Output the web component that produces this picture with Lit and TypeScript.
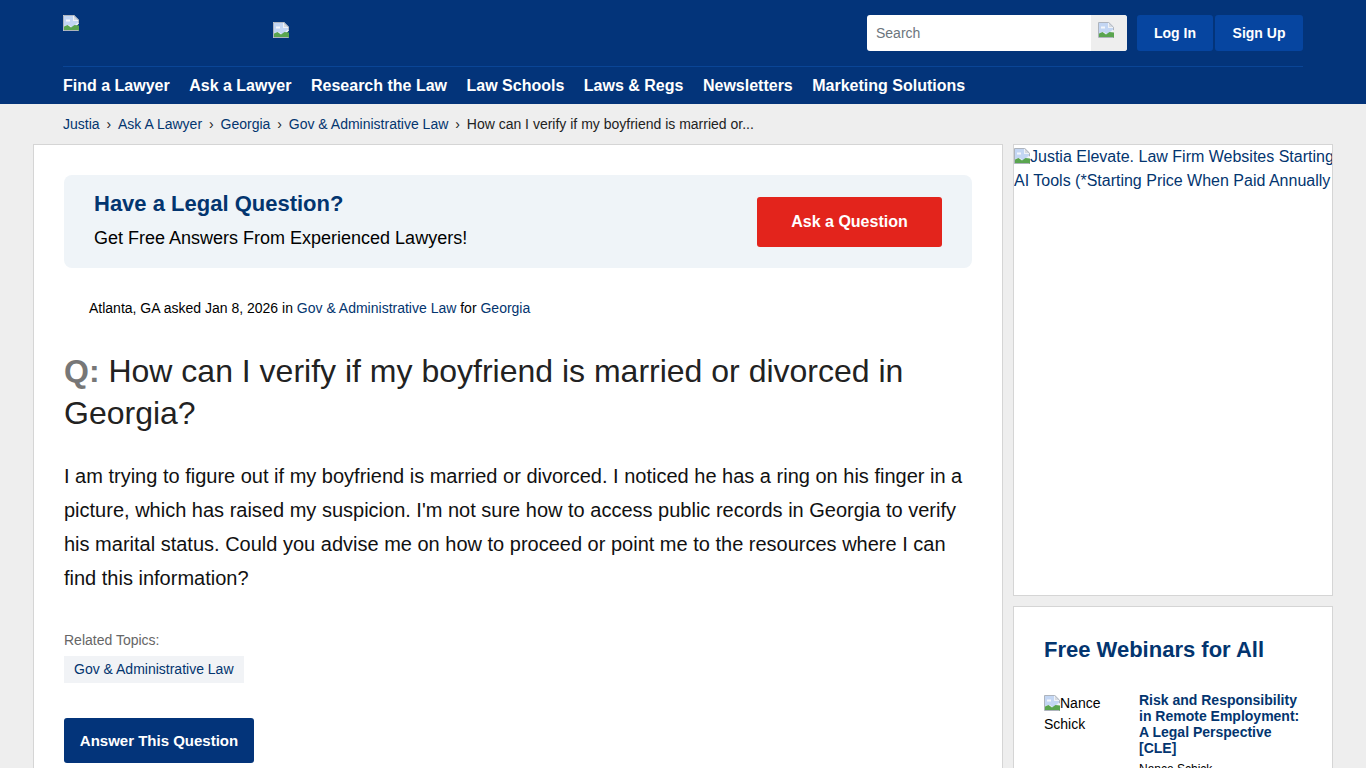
import { LitElement, html, css, svg } from "lit";
import { customElement } from "lit/decorators.js";

const brokenImage = svg`<svg class="broken" width="16" height="16" viewBox="0 0 16 16"><path d="M0 0H11L16 5V8.5L13 11.5V16H0Z" fill="#eef2f8"/><path d="M1 1H10V6H15V7.5L9 12.5L6 10L1 11Z" fill="#c3d6f3"/><path d="M3 4.5H7V6.5H3Z" fill="#f4f7fc"/><path d="M1 15V11.5L4.5 10L8 12.5L11.5 10L16 10.5V16H1Z" fill="#5aa54f"/><path d="M11 0.5V5H15.5Z" fill="#d6dae0"/><path d="M0.5 0.5H10.8L15.5 5.2V8.2M15.5 15.5H0.5V0.5" fill="none" stroke="#aeb4bd"/></svg>`;

@customElement("app-root")
export class AppRoot extends LitElement {
  static styles = css`
    :host {
      display: block;
      height: 768px;
      overflow: hidden;
      background: #eee;
      color: #000;
      font-family: "Liberation Sans", Arial, sans-serif;
    }
    a {
      color: #03356f;
      text-decoration: none;
    }
    .broken {
      display: inline-block;
      flex: none;
    }
    header {
      height: 104px;
      background: #03347a;
      box-sizing: border-box;
      padding: 15px 63px 0;
    }
    .top {
      width: 1240px;
      height: 52px;
      box-sizing: border-box;
      border-bottom: 1px solid #0a4596;
      display: flex;
      align-items: flex-start;
    }
    .logo {
      display: block;
      width: 210px;
      height: 16px;
    }
    .logo-two {
      display: block;
      padding-top: 7px;
    }
    .search {
      margin-left: auto;
      width: 260px;
      height: 36px;
      display: flex;
      background: #fff;
      border-radius: 3px;
      overflow: hidden;
    }
    .search .field {
      flex: 1;
      padding-left: 9px;
      font-size: 14px;
      line-height: 36px;
      color: #6c757d;
    }
    .search .go {
      width: 36px;
      background: #eee;
      padding: 7px 0 0 7px;
      box-sizing: border-box;
    }
    .auth {
      display: flex;
      gap: 2px;
      margin-left: 10px;
    }
    .auth a {
      height: 36px;
      line-height: 36px;
      background: #0645a0;
      color: #fff;
      font-size: 14px;
      font-weight: 700;
      text-align: center;
      border-radius: 3px;
    }
    .auth .login {
      width: 76px;
    }
    .auth .signup {
      width: 88px;
    }
    nav {
      display: flex;
      gap: 19.5px;
      margin-top: 9px;
    }
    nav a {
      color: #fff;
      font-size: 16px;
      font-weight: 700;
      line-height: 20px;
      white-space: nowrap;
    }
    .crumbs {
      height: 40px;
      box-sizing: border-box;
      padding-left: 63px;
      display: flex;
      align-items: center;
      font-size: 14px;
      color: #222;
      white-space: nowrap;
    }
    .crumbs i {
      font-style: normal;
      padding: 0 6.9px;
    }
    .layout {
      display: flex;
      align-items: flex-start;
      gap: 10px;
      padding-left: 33px;
    }
    main {
      width: 970px;
      box-sizing: border-box;
      padding: 30px 30px 40px;
      background: #fff;
      border: 1px solid #d5d5d5;
      border-bottom: 0;
    }
    .promo {
      height: 93px;
      box-sizing: border-box;
      background: #eff4f8;
      border-radius: 8px;
      padding: 0 30px;
      display: flex;
      align-items: center;
      justify-content: space-between;
    }
    .promo .lead {
      padding-bottom: 4px;
    }
    .promo h2 {
      margin: 0 0 8px;
      font-size: 22px;
      line-height: 28px;
      color: #03356f;
    }
    .promo p {
      margin: 0;
      font-size: 18px;
      line-height: 24px;
    }
    .ask {
      width: 185px;
      height: 50px;
      line-height: 50px;
      background: #e3241c;
      color: #fff;
      border-radius: 3px;
      font-size: 16px;
      font-weight: 700;
      text-align: center;
    }
    .meta {
      margin: 30px 0 0 25px;
      font-size: 14px;
      line-height: 20px;
    }
    h1 {
      margin: 32px 0 0;
      font-size: 32px;
      font-weight: 400;
      line-height: 42px;
      color: #222;
    }
    h1 b {
      color: #777;
    }
    .body {
      margin: 25px 0 0;
      font-size: 20px;
      line-height: 34px;
      color: #111;
    }
    .label {
      margin-top: 35px;
      font-size: 14px;
      line-height: 20px;
      color: #666;
    }
    .tag {
      display: inline-block;
      margin-top: 6px;
      padding: 0 10px;
      height: 27px;
      line-height: 27px;
      background: #f1f3f6;
      font-size: 14px;
    }
    .answer {
      display: block;
      width: 190px;
      height: 45px;
      line-height: 45px;
      margin-top: 35px;
      background: #03347a;
      color: #fff;
      border-radius: 3px;
      font-size: 15px;
      font-weight: 700;
      text-align: center;
    }
    aside {
      width: 320px;
      display: flex;
      flex-direction: column;
      gap: 10px;
    }
    .ad {
      height: 452px;
      box-sizing: border-box;
      background: #fff;
      border: 1px solid #d5d5d5;
      font-size: 16px;
      line-height: 24px;
      white-space: nowrap;
      overflow: hidden;
    }
    .ad a {
      display: block;
    }
    .ad .broken {
      vertical-align: -2px;
    }
    .webinars {
      background: #fff;
      border: 1px solid #d5d5d5;
      border-bottom: 0;
      box-sizing: border-box;
      padding: 30px 30px 0;
      height: 300px;
    }
    .webinars h3 {
      margin: 0;
      font-size: 22px;
      line-height: 26px;
      color: #03356f;
    }
    .event {
      display: flex;
      gap: 20px;
      margin-top: 29px;
    }
    .photo {
      width: 75px;
      margin-top: 1px;
      font-size: 14px;
      line-height: 21px;
      flex: none;
    }
    .photo .broken {
      vertical-align: -3px;
    }
    .event a {
      display: block;
      font-size: 14px;
      font-weight: 700;
      line-height: 16px;
    }
    .event p {
      margin: 5px 0 0;
      font-size: 12px;
      line-height: 16px;
    }
  `;

  render() {
    return html`
      <header>
        <div class="top">
          <a class="logo" href="#">${brokenImage}</a>
          <a class="logo-two" href="#">${brokenImage}</a>
          <div class="search">
            <div class="field">Search</div>
            <div class="go">${brokenImage}</div>
          </div>
          <div class="auth">
            <a class="login" href="#">Log In</a>
            <a class="signup" href="#">Sign Up</a>
          </div>
        </div>
        <nav>
          <a href="#">Find a Lawyer</a>
          <a href="#">Ask a Lawyer</a>
          <a href="#">Research the Law</a>
          <a href="#">Law Schools</a>
          <a href="#">Laws &amp; Regs</a>
          <a href="#">Newsletters</a>
          <a href="#">Marketing Solutions</a>
        </nav>
      </header>
      <div class="crumbs">
        <a href="#">Justia</a><i>›</i>
        <a href="#">Ask A Lawyer</a><i>›</i>
        <a href="#">Georgia</a><i>›</i>
        <a href="#">Gov &amp; Administrative Law</a><i>›</i>
        <span>How can I verify if my boyfriend is married or...</span>
      </div>
      <div class="layout">
        <main>
          <section class="promo">
            <div class="lead">
              <h2>Have a Legal Question?</h2>
              <p>Get Free Answers From Experienced Lawyers!</p>
            </div>
            <a class="ask" href="#">Ask a Question</a>
          </section>
          <div class="meta">
            Atlanta, GA asked Jan 8, 2026 in
            <a href="#">Gov &amp; Administrative Law</a> for
            <a href="#">Georgia</a>
          </div>
          <h1><b>Q:</b> How can I verify if my boyfriend is married or divorced in Georgia?</h1>
          <p class="body">
            I am trying to figure out if my boyfriend is married or divorced. I noticed he has a
            ring on his finger in a picture, which has raised my suspicion. I'm not sure how to
            access public records in Georgia to verify his marital status. Could you advise me on
            how to proceed or point me to the resources where I can find this information?
          </p>
          <div class="label">Related Topics:</div>
          <a class="tag" href="#">Gov &amp; Administrative Law</a>
          <a class="answer" href="#">Answer This Question</a>
        </main>
        <aside>
          <div class="ad">
            <a href="#">${brokenImage}Justia Elevate. Law Firm Websites Starting</a>
            <a href="#">AI Tools (*Starting Price When Paid Annually</a>
          </div>
          <div class="webinars">
            <h3>Free Webinars for All</h3>
            <div class="event">
              <div class="photo">${brokenImage}Nance Schick</div>
              <div>
                <a href="#">Risk and Responsibility in Remote Employment: A Legal Perspective [CLE]</a>
                <p>Nance Schick</p>
              </div>
            </div>
          </div>
        </aside>
      </div>
    `;
  }
}
